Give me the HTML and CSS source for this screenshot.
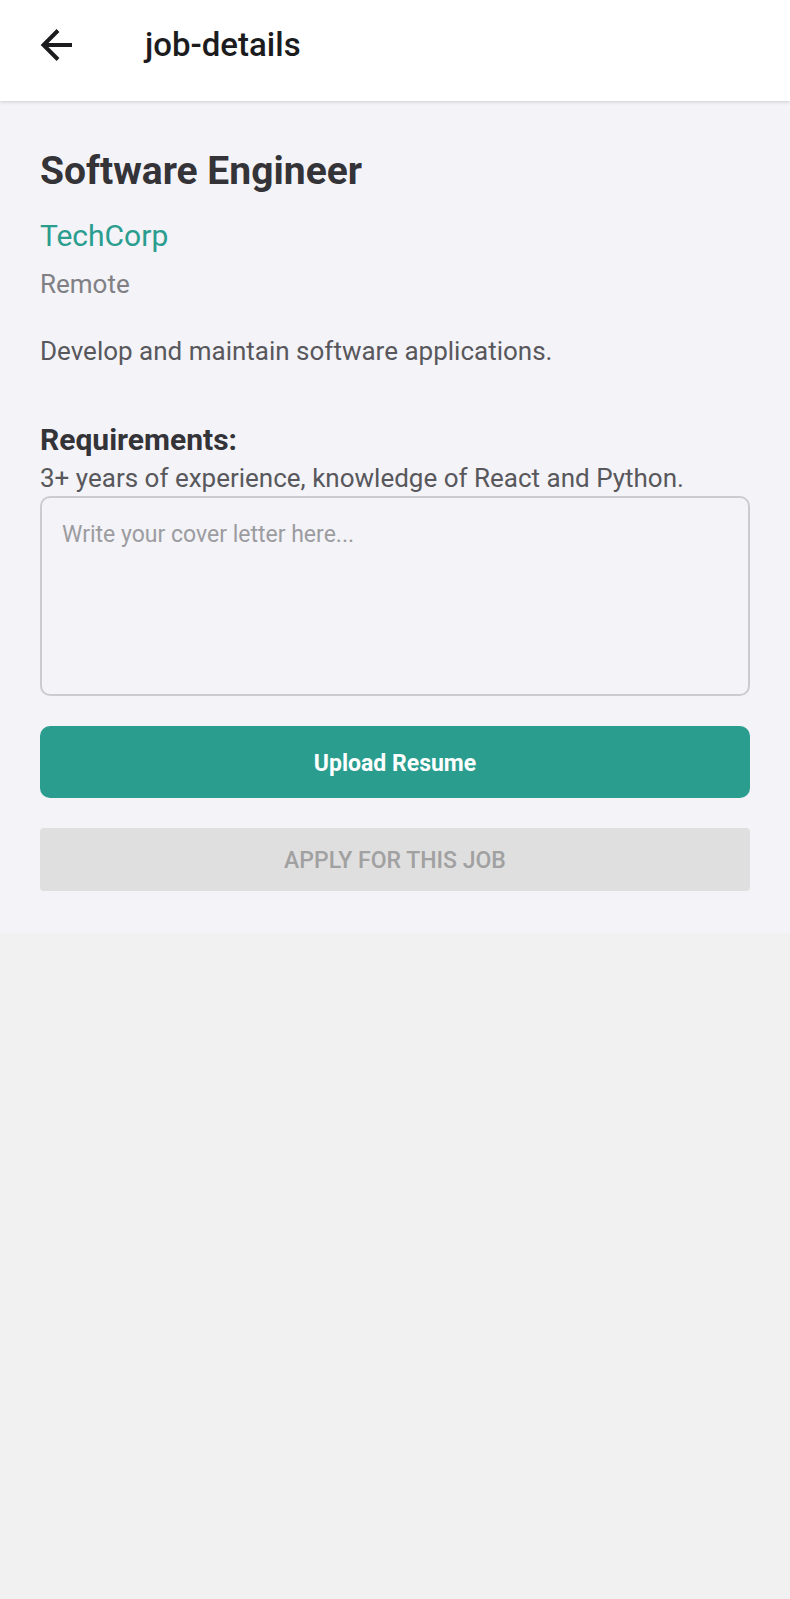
FILE: index.html
```html
<!DOCTYPE html>
<html lang="en">
<head>
<meta charset="utf-8">
<meta name="viewport" content="width=device-width, initial-scale=1">
<title>job-details</title>
<link rel="stylesheet" href="styles.css">
</head>
<body>
<header class="topbar">
  <button class="back" type="button" aria-label="Back">
    <svg viewBox="0 0 32 32" width="32" height="32" aria-hidden="true"><path d="M18 1.500 3.500 16 18 30.500M3.500 16H32" fill="none" stroke="#1c1c1e" stroke-width="4"/></svg>
  </button>
  <div class="topbar-title">job-details</div>
</header>
<main class="job">
  <h1 class="title">Software Engineer</h1>
  <p class="company">TechCorp</p>
  <p class="location">Remote</p>
  <p class="description">Develop and maintain software applications.</p>
  <h2 class="subtitle">Requirements:</h2>
  <p class="requirements">3+ years of experience, knowledge of React and Python.</p>
  <textarea class="letter" aria-label="Cover letter" placeholder="Write your cover letter here..."></textarea>
  <button class="upload" type="button">Upload Resume</button>
  <button class="apply" type="button" disabled>APPLY FOR THIS JOB</button>
</main>
</body>
</html>
```
FILE: styles.css
```css
* {
  box-sizing: border-box;
}

body {
  margin: 0;
  background: #f1f1f1;
  font-family: Roboto, sans-serif;
}

h1, h2, p {
  margin: 0;
}

button {
  border: 0;
  font-family: inherit;
}

.topbar {
  position: relative;
  display: flex;
  align-items: center;
  gap: 73px;
  min-height: 101px;
  padding: 0 40px 11px;
  background: #fff;
  box-shadow: 0 1px 4px rgba(0, 0, 0, 0.16);
}

.back {
  display: flex;
  padding: 0;
  background: none;
}

.topbar-title {
  font-size: 33px;
  line-height: 44px;
  font-weight: 500;
  color: #1c1c1e;
}

.job {
  display: flex;
  flex-direction: column;
  padding: 40px 40px 42px;
  background: #f3f3f8;
}

.title {
  margin-bottom: 15px;
  font-size: 39px;
  line-height: 60px;
  font-weight: 700;
  color: #333338;
}

.company {
  margin-bottom: 10px;
  font-size: 30px;
  line-height: 40px;
  color: #2a9d8f;
}

.location {
  margin-bottom: 30px;
  font-size: 26px;
  line-height: 36px;
  color: #808084;
}

.description {
  margin-bottom: 50px;
  font-size: 26px;
  line-height: 38px;
  color: #58585c;
}

.subtitle {
  font-size: 30px;
  line-height: 40px;
  font-weight: 700;
  color: #333338;
}

.requirements {
  font-size: 26px;
  line-height: 36px;
  color: #58585c;
}

.letter {
  display: block;
  height: 200px;
  margin-bottom: 30px;
  padding: 20px;
  border: 2px solid #ccccd0;
  border-radius: 10px;
  background: transparent;
  font-family: inherit;
  font-size: 23px;
  line-height: 34px;
  color: #333;
  resize: none;
}

.letter::placeholder {
  color: #9c9ca0;
  opacity: 1;
}

.upload {
  height: 72px;
  padding: 2px 20px 0;
  margin-bottom: 30px;
  border-radius: 10px;
  background: #2a9d8f;
  font-size: 23px;
  font-weight: 700;
  color: #fff;
}

.apply {
  height: 63px;
  padding: 2px 20px 0;
  border-radius: 4px;
  background: #dfdfdf;
  font-size: 23px;
  font-weight: 500;
  color: #a1a1a1;
}
```
